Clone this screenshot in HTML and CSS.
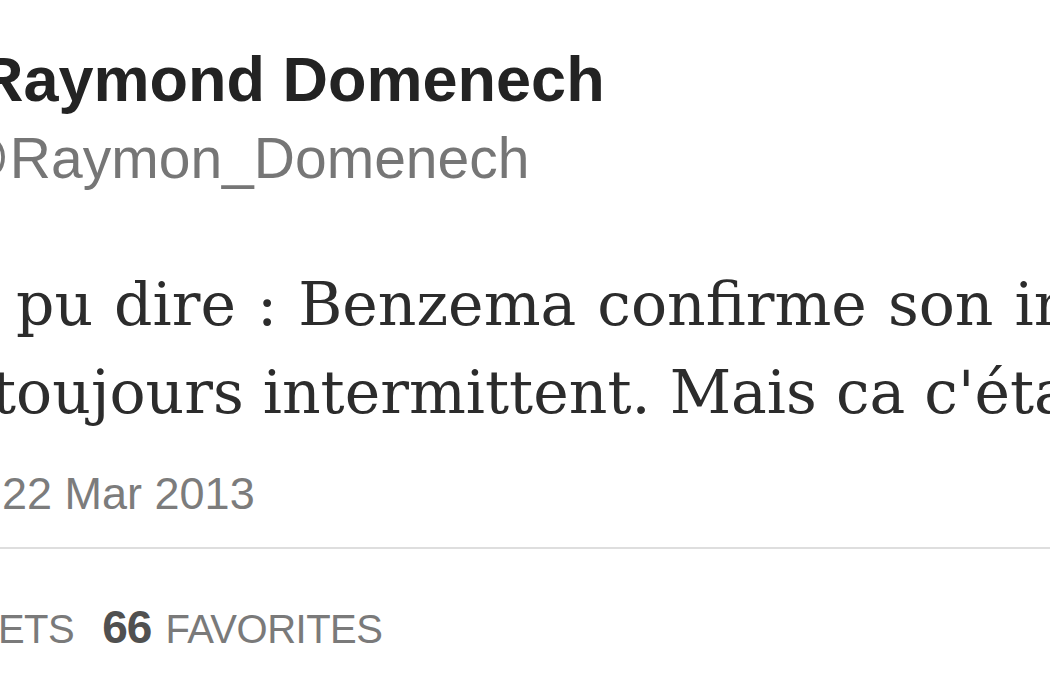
FILE: index.html
```html
<!DOCTYPE html>
<html lang="fr">
<head>
<meta charset="utf-8">
<title>Raymond Domenech</title>
<link rel="stylesheet" href="styles.css">
</head>
<body>
<div class="tweet">
  <div class="author">
    <div class="name">Raymond Domenech</div>
    <div class="handle">@Raymon_Domenech</div>
  </div>
  <div class="text">
    <div class="line line-1">pu dire : Benzema confirme son intermittence</div>
    <div class="line line-2">toujours intermittent. Mais ca c'était</div>
  </div>
  <div class="date">22 Mar 2013</div>
  <div class="sep"></div>
  <div class="stats">
    <span class="label label-rt">RETWEETS</span>
    <span class="count">66</span>
    <span class="label">FAVORITES</span>
  </div>
</div>
</body>
</html>
```
FILE: styles.css
```css
html, body {
  margin: 0;
  padding: 0;
  background: #ffffff;
}
.tweet {
  width: 1050px;
  height: 700px;
  overflow: hidden;
  display: flex;
  flex-direction: column;
  padding-top: 44px;
  box-sizing: border-box;
  font-family: "Liberation Sans", Arial, sans-serif;
}
.author {
  display: flex;
  flex-direction: column;
  gap: 14px;
}
.name {
  font-weight: bold;
  font-size: 63px;
  line-height: 70px;
  color: #232323;
  margin-left: -22px;
  white-space: nowrap;
}
.handle {
  font-size: 57px;
  line-height: 60px;
  color: #767676;
  margin-left: -48px;
  white-space: nowrap;
}
.text {
  margin-top: 72px;
  font-family: "DejaVu Serif", Georgia, serif;
  font-size: 60px;
  line-height: 88px;
  color: #2c2c2c;
  white-space: nowrap;
}
.line-1 {
  margin-left: 16px;
  word-spacing: 2px;
}
.line-2 {
  margin-left: -8px;
}
.date {
  margin-top: 33px;
  font-size: 45px;
  line-height: 50px;
  color: #7c7c7c;
  margin-left: 2px;
  white-space: nowrap;
}
.sep {
  margin-top: 28px;
  height: 2px;
  background: #dedede;
}
.stats {
  margin-top: 53px;
  font-size: 40px;
  letter-spacing: -0.5px;
  line-height: 50px;
  color: #7a7a7a;
  white-space: nowrap;
  display: flex;
  align-items: baseline;
}
.label-rt {
  margin-left: -144px;
}
.count {
  font-weight: bold;
  font-size: 46px;
  letter-spacing: -1px;
  color: #505050;
  margin-left: 28px;
  margin-right: 14px;
}
```
